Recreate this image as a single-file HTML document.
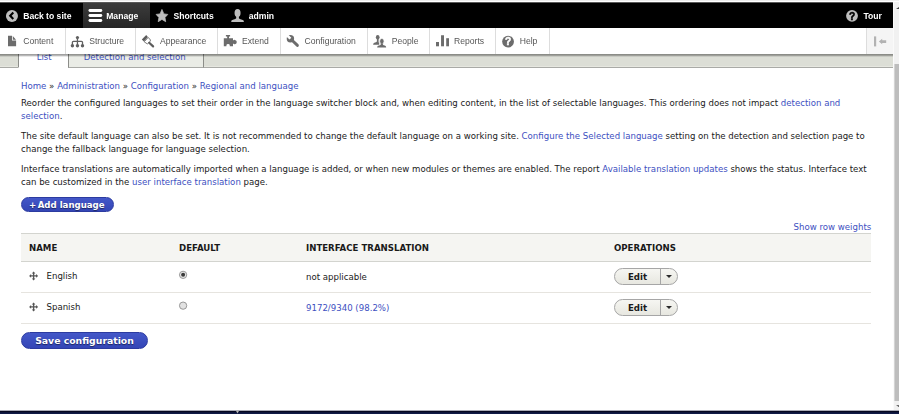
<!DOCTYPE html>
<html lang="en">
<head>
<meta charset="utf-8">
<title>Languages</title>
<style>
*{box-sizing:border-box;margin:0;padding:0}
html,body{width:899px;height:414px;overflow:hidden;background:#fff}
body{position:relative;font-family:"DejaVu Sans","Liberation Sans",sans-serif;font-size:8.61px;color:#1a1a1a;line-height:13px}
a{color:#3d4fbf;text-decoration:none}
.abs{position:absolute;white-space:nowrap}
svg{position:absolute;overflow:visible}
/* toolbar */
#topstrip{position:absolute;left:0;top:0;width:899px;height:3px;background:linear-gradient(#eee 0,#eee 1px,#fff 1px,#fff 2px,#5a5a5a 2px,#5a5a5a 3px)}
#bar{position:absolute;left:0;top:3px;width:893px;height:25px;background:#000;font-family:"Liberation Sans",sans-serif;font-weight:bold;color:#fff;font-size:8.61px;z-index:6;will-change:transform}
#bar .tab{position:absolute;top:0;height:25px;line-height:26px;white-space:nowrap;color:#fff}
#bar .act{position:absolute;left:83px;top:0;width:67px;height:25px;background:linear-gradient(#3c3c3c,#262626)}
#tray{position:absolute;left:0;top:28px;width:893px;height:26px;background:#fff;font-family:"Liberation Sans",sans-serif;font-size:8.61px;color:#565656;z-index:5;will-change:transform}
#shadow{position:absolute;left:0;top:54px;width:893px;height:3px;z-index:5;background:linear-gradient(rgba(0,0,0,.37) 0,rgba(0,0,0,.37) 1px,rgba(0,0,0,.28) 1px,rgba(0,0,0,.28) 2px,rgba(0,0,0,.09) 2px,rgba(0,0,0,.09) 3px)}
#tray .it{position:absolute;top:0;height:26px;line-height:27px;white-space:nowrap;color:#565656}
#tray .sep{position:absolute;top:0;width:1px;height:26px;background:#ddd}
#band{position:absolute;left:0;top:54px;width:893px;height:14px;background:#dcded6;border-bottom:1px solid #a9aaa6;box-shadow:inset 0 -1px 0 #e6e7e0}
.ptab{position:absolute;top:40px;height:28px;border:1px solid #8c8d89;border-bottom-color:#a9aaa6}
.btn{border-radius:8px;background:linear-gradient(#4357c8,#3446b6);border:1px solid #2c3ba0;color:#fff;font-weight:bold;text-align:center;text-shadow:0 1px 1px rgba(0,0,0,.5)}
.th{font-weight:bold;font-size:8.61px;color:#1a1a1a}
.radio{position:absolute;width:8px;height:8px;border-radius:50%;border:1px solid #8c8c8c;background:#e3e3e3}
.ebtn{position:absolute;width:63.6px;height:16.6px;border-radius:9px;border:1px solid #a6a6a6;background:linear-gradient(#f6f6f2,#e7e7e0)}
.ebtn b{position:absolute;left:12.6px;top:1.7px;font-size:8.61px;line-height:13px;color:#1a1a1a}
.ebtn i{position:absolute;left:44.4px;top:0;width:1px;height:15px;background:#a6a6a6}
.ebtn u{position:absolute;left:50.6px;top:5.8px;width:0;height:0;border-left:3px solid transparent;border-right:3px solid transparent;border-top:3.4px solid #2a2a2a}
</style>
</head>
<body>
<div id="band"></div>
<div class="ptab" style="left:18px;width:51px;background:#fff;border-bottom-color:#fff"></div>
<div class="ptab" style="left:68px;width:136px;background:#eaece6"></div>
<a class="abs" style="left:36.7px;top:51px">List</a>
<a class="abs" style="left:83.7px;top:51px">Detection and selection</a>

<div id="topstrip"></div>
<div id="bar">
  <div class="act"></div>
  <div class="tab" style="left:23.2px">Back to site</div>
  <div class="tab" style="left:106.2px">Manage</div>
  <div class="tab" style="left:173.6px">Shortcuts</div>
  <div class="tab" style="left:248.8px">admin</div>
  <div class="tab" style="left:863.4px">Tour</div>
</div>
<div id="shadow"></div>
<div id="tray">
  <div class="sep" style="left:65px"></div>
  <div class="sep" style="left:135px"></div>
  <div class="sep" style="left:217px"></div>
  <div class="sep" style="left:280px"></div>
  <div class="sep" style="left:367px"></div>
  <div class="sep" style="left:429px"></div>
  <div class="sep" style="left:495px"></div>
  <div class="sep" style="left:549px"></div>
  <div class="it" style="left:23.2px">Content</div>
  <div class="it" style="left:89.2px">Structure</div>
  <div class="it" style="left:160px">Appearance</div>
  <div class="it" style="left:242px">Extend</div>
  <div class="it" style="left:304.6px">Configuration</div>
  <div class="it" style="left:391.7px">People</div>
  <div class="it" style="left:454px">Reports</div>
  <div class="it" style="left:519.7px">Help</div>
  <div style="position:absolute;left:866px;top:0;width:27px;height:26px;background:#f5f5f5;border-left:1px solid #ddd"></div>
</div>
<svg id="icons" style="left:0;top:0;z-index:7" width="893" height="56" viewBox="0 0 893 56">
  <!-- back to site -->
  <circle cx="11.95" cy="15.9" r="6" fill="#bebebe"/>
  <path d="M13.3 12.5 L10.2 15.7 L13.3 18.9" fill="none" stroke="#000" stroke-width="2.1"/>
  <!-- hamburger -->
  <g fill="#fff"><rect x="88.5" y="9.1" width="13.8" height="2.9" rx="1.45"/><rect x="88.5" y="14.05" width="13.8" height="2.9" rx="1.45"/><rect x="88.5" y="19.05" width="13.8" height="2.9" rx="1.45"/></g>
  <!-- star -->
  <path d="M161.95 9.4 L163.9 13.9 L167.8 14.4 L165 17.5 L165.7 21.7 L161.95 19.4 L158.2 21.7 L158.9 17.5 L156.1 14.4 L160 13.9 Z" fill="#bebebe" stroke="#bebebe" stroke-width=".7" stroke-linejoin="round"/>
  <!-- person -->
  <g fill="#bebebe"><ellipse cx="237.55" cy="12.9" rx="3" ry="4"/><path d="M236.2 16 H238.9 V18.2 C239.6 19.4 243 19.6 243.8 20.8 V22 H231.3 V20.8 C232.1 19.6 235.5 19.4 236.2 18.2 Z"/></g>
  <!-- tour -->
  <circle cx="852" cy="15.8" r="5.9" fill="#bebebe"/>
  <text x="852" y="19.5" text-anchor="middle" font-family="Liberation Sans, sans-serif" font-weight="bold" font-size="10.2" fill="#000" stroke="#000" stroke-width=".5">?</text>
  <!-- file -->
  <path d="M8 35.8 H12 V40.6 H16.1 V46.3 H8 Z M12.8 36 L16 39.8 H12.8 Z" fill="#6c6c6c"/>
  <!-- orgchart -->
  <g fill="#606060"><circle cx="77.45" cy="37.5" r="1.6"/><circle cx="72.4" cy="45.7" r="1.7"/><circle cx="77.45" cy="45.7" r="1.7"/><circle cx="82.5" cy="45.7" r="1.7"/></g>
  <path d="M77.45 37.5 V45.7 M72.4 45.7 V42.3 Q72.4 41.3 73.4 41.3 H81.5 Q82.5 41.3 82.5 42.3 V45.7" fill="none" stroke="#606060" stroke-width="1.3"/>
  <!-- paintbrush -->
  <path d="M141.8 39.5 L146.2 35.1 L147.9 37.1 L143.9 41.5 Z" fill="#5c5c5c"/>
  <path d="M144.2 41.8 L148.2 37.4 L150.5 40 Q150.4 41.3 149.4 42 Q148.6 43.4 147.3 43.9 Z" fill="#fff" stroke="#6c6c6c" stroke-width=".9" stroke-linejoin="round"/>
  <path d="M149.2 42.8 L153.1 46.4" stroke="#5c5c5c" stroke-width="2.2" stroke-linecap="round"/>
  <!-- puzzle -->
  <path d="M225.9 35.1 H230.1 V36.5 H229 V38.2 H233 V40.6 Q233.9 39.7 235 39.9 Q236.8 40.3 236.8 42.1 Q236.8 43.9 235 44.3 Q233.9 44.5 233 43.6 V46.3 H229.8 V45.4 Q229.8 44.1 228.1 44.1 Q226.4 44.1 226.4 45.4 V46.3 H223.8 V38.2 H227.2 V36.5 H225.9 Z" fill="#6c6c6c"/>
  <!-- wrench -->
  <circle cx="290.4" cy="38.7" r="3.7" fill="#6c6c6c"/>
  <path d="M290.4 38.7 L287.2 33.2 L284.9 35.5 Z" fill="#fff" transform="rotate(0)"/>
  <rect x="-1.3" y="-6" width="2.6" height="6.4" fill="#fff" transform="translate(290.1 38.4) rotate(-45)"/>
  <path d="M291.8 40 L297.4 45.4" stroke="#6c6c6c" stroke-width="2.9" stroke-linecap="round"/>
  <!-- people -->
  <g fill="#6c6c6c"><ellipse cx="377.7" cy="37.3" rx="1.85" ry="2.3"/><path d="M376.9 39 H378.6 V42.4 H379.2 V44.7 H373.2 V43.9 Q373.6 43 375.1 42.6 Q376.9 42.2 376.9 41.2 Z"/><ellipse cx="381.85" cy="41.2" rx="2.2" ry="2.75" stroke="#fff" stroke-width=".7"/><path d="M380.8 43.2 H382.9 V44.4 Q383.4 45.2 384.7 45.6 Q385.9 46 386.1 47.1 V47.6 H377.2 V47.1 Q377.4 46 378.8 45.6 Q380.3 45.2 380.8 44.4 Z"/></g>
  <!-- barchart -->
  <g fill="#6c6c6c"><rect x="436" y="42" width="3" height="4.3"/><rect x="441.05" y="35.25" width="2.95" height="11.05"/><rect x="446.2" y="38.2" width="2.8" height="8.1"/></g>
  <!-- help -->
  <circle cx="508.05" cy="41.55" r="5.9" fill="#6c6c6c"/>
  <text x="508.05" y="45.2" text-anchor="middle" font-family="Liberation Sans, sans-serif" font-weight="bold" font-size="10.2" fill="#fff" stroke="#fff" stroke-width=".5">?</text>
  <!-- orientation toggle -->
  <g fill="#b2b2b2"><rect x="874" y="36.4" width="2.2" height="10"/><path d="M878.9 41.5 L882.2 38.7 V40.2 H886.2 V42.9 H882.2 V44.3 Z"/></g>
</svg>

<div class="abs" style="left:21px;top:80px"><a>Home</a> » <a>Administration</a> » <a>Configuration</a> » <a>Regional and language</a></div>
<div class="abs" style="left:21px;top:97px">Reorder the configured languages to set their order in the language switcher block and, when editing content, in the list of selectable languages. This ordering does not impact <a>detection and</a></div>
<div class="abs" style="left:21px;top:110.3px"><a>selection</a>.</div>
<div class="abs" style="left:21px;top:129.5px">The site default language can also be set. It is not recommended to change the default language on a working site. <a>Configure the Selected language</a> setting on the detection and selection page to</div>
<div class="abs" style="left:21px;top:142.8px">change the fallback language for language selection.</div>
<div class="abs" style="left:21px;top:162.5px">Interface translations are automatically imported when a language is added, or when new modules or themes are enabled. The report <a>Available translation updates</a> shows the status. Interface text</div>
<div class="abs" style="left:21px;top:175.8px">can be customized in the <a>user interface translation</a> page.</div>

<div class="abs btn" style="left:21px;top:197px;width:93px;height:14.6px;line-height:14.2px;text-align:left;padding-left:6.9px">+<span style="margin-left:1.6px">Add language</span></div>

<a class="abs" style="left:793.5px;top:220.5px">Show row weights</a>

<div class="abs" style="left:21px;top:233px;width:850px;height:29px;background:#f5f5f2;border-top:1px solid #d3d4cf;border-bottom:1px solid #d3d4cf"></div>
<div class="abs" style="left:21px;top:292px;width:850px;height:1px;background:#e6e4df"></div>
<div class="abs" style="left:21px;top:323px;width:850px;height:1px;background:#e6e4df"></div>
<div class="abs th" style="left:29px;top:241.5px">NAME</div>
<div class="abs th" style="left:179px;top:241.5px">DEFAULT</div>
<div class="abs th" style="left:306px;top:241.5px">INTERFACE TRANSLATION</div>
<div class="abs th" style="left:614px;top:241.5px">OPERATIONS</div>

<div class="abs" style="left:46.5px;top:270.4px">English</div>
<div class="abs" style="left:46.5px;top:301.4px">Spanish</div>
<div class="abs" style="left:306px;top:270.5px">not applicable</div>
<a class="abs" style="left:306px;top:301.5px">9172/9340 (98.2%)</a>


<svg style="left:29px;top:271px" width="10" height="10" viewBox="0 0 10 10"><path d="M4.6 0.40000000000000036 L6.3999999999999995 2.4000000000000004 H5.25 V4.25 H7.1 V3.1000000000000005 L9.1 4.9 L7.1 6.7 V5.550000000000001 H5.25 V7.4 H6.3999999999999995 L4.6 9.4 L2.8 7.4 H3.9499999999999997 V5.550000000000001 H2.0999999999999996 V6.7 L0.09999999999999964 4.9 L2.0999999999999996 3.1000000000000005 V4.25 H3.9499999999999997 V2.4000000000000004 H2.8 Z" fill="#555"/></svg>
<svg style="left:29px;top:302px" width="10" height="10" viewBox="0 0 10 10"><path d="M4.6 0.40000000000000036 L6.3999999999999995 2.4000000000000004 H5.25 V4.25 H7.1 V3.1000000000000005 L9.1 4.9 L7.1 6.7 V5.550000000000001 H5.25 V7.4 H6.3999999999999995 L4.6 9.4 L2.8 7.4 H3.9499999999999997 V5.550000000000001 H2.0999999999999996 V6.7 L0.09999999999999964 4.9 L2.0999999999999996 3.1000000000000005 V4.25 H3.9499999999999997 V2.4000000000000004 H2.8 Z" fill="#555"/></svg>
<svg style="left:178px;top:270px" width="10" height="10" viewBox="0 0 10 10"><circle cx="5.1" cy="4.85" r="3.65" fill="#e6e6e6" stroke="#8e8e8e" stroke-width=".9"/><circle cx="5.1" cy="4.85" r="2" fill="#3a3a3a"/></svg>
<svg style="left:178px;top:301px" width="10" height="10" viewBox="0 0 10 10"><circle cx="5.1" cy="4.65" r="3.65" fill="#e2e2e2" stroke="#8e8e8e" stroke-width=".9"/></svg>
<div class="ebtn" style="left:614.4px;top:268px"><b>Edit</b><i></i><u></u></div>
<div class="ebtn" style="left:614.4px;top:299px"><b>Edit</b><i></i><u></u></div>
<div class="abs btn" style="left:21px;top:332px;width:127px;height:17.4px;font-size:9.3px;line-height:15.4px;border-radius:9px">Save configuration</div>

<div class="abs" style="left:893px;top:2px;width:6px;height:409px;background:linear-gradient(90deg,#fafafa 0,#fafafa 1px,#f1f1f1 1px)"></div>
<div class="abs" style="left:894px;top:64px;width:5px;height:337px;background:linear-gradient(90deg,#d4d4d4 0,#d4d4d4 1px,#bdbdbd 1px)"></div>
<svg style="left:893px;top:0" width="6" height="414" viewBox="0 0 6 414"><path d="M3 9 L6 7 V9 Z M3 405.2 H6 V407 Z" fill="#444"/></svg>
<div class="abs" style="left:0;top:410px;width:899px;height:1px;background:#a9abb6"></div>
<div class="abs" style="left:0;top:411px;width:899px;height:1px;background:#04071f"></div>
<div class="abs" style="left:0;top:412px;width:899px;height:1px;background:#0c1339"></div>
<div class="abs" style="left:0;top:413px;width:899px;height:1px;background:#101a46"></div>
<svg style="left:234px;top:410px" width="7" height="4" viewBox="0 0 7 4"><path d="M1.9 0.8 H5.1 L3.5 3.6 Z" fill="#b4b4b4"/></svg>
</body>
</html>
